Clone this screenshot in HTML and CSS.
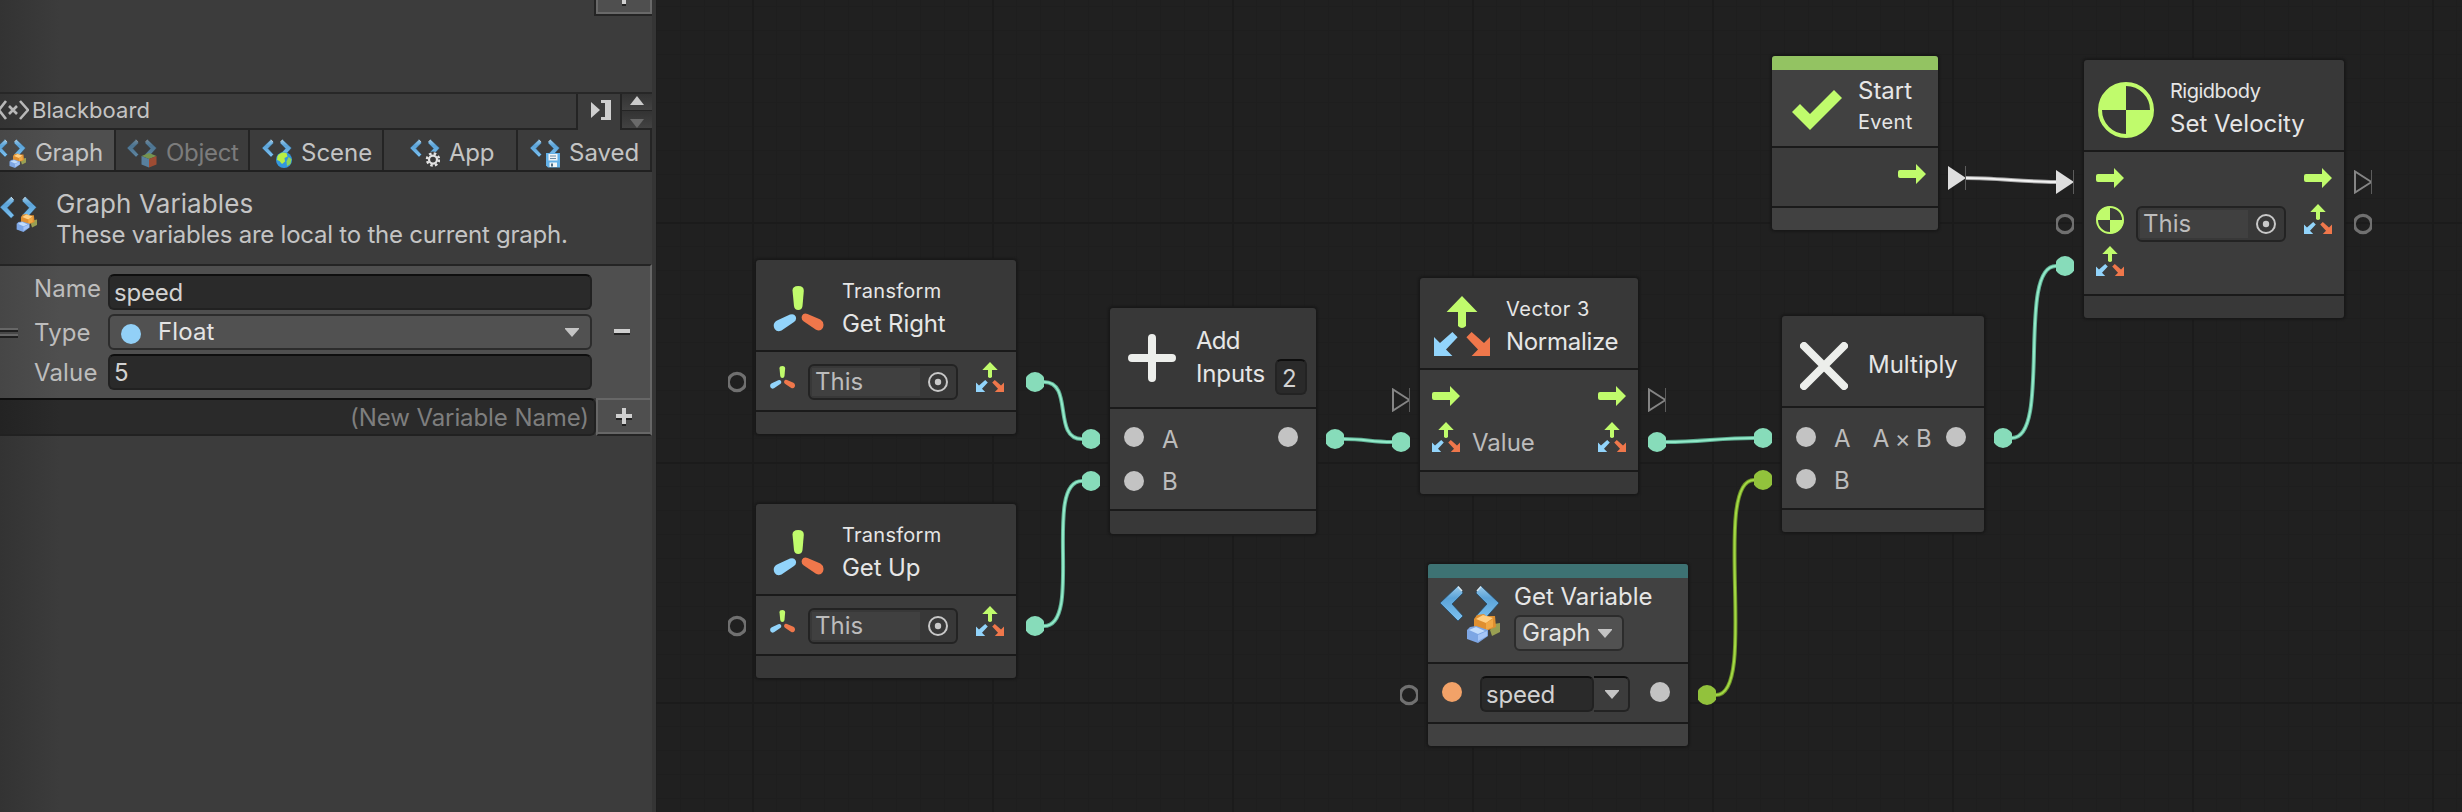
FILE: index.html
```html
<!DOCTYPE html>
<html lang="en">
<head>
<meta charset="utf-8">
<title>Script Graph</title>
<link rel="stylesheet" href="styles.css">
</head>
<body>
<svg class="defs" width="0" height="0">
  <defs>
    <linearGradient id="steel" x1="0" y1="0" x2="0" y2="1"><stop offset="0" stop-color="#9ccbea"/><stop offset=".35" stop-color="#5ba3d8"/><stop offset="1" stop-color="#7ec3f2"/></linearGradient>
  </defs>
  <symbol id="vec" viewBox="0 0 28 30">
    <path fill="#c0fb6c" d="M14 0L21.7 8H16V15Q14 17 12 15V8H6.3Z"/>
    <path fill="#92d4fb" d="M0 20.5L3 23.5L9.2 18L11.8 20.6L6 26.8L9.2 30H0Z"/>
    <path fill="#ef774b" d="M28 20.5L25 23.5L18.8 18L16.2 20.6L22 26.8L18.8 30H28Z"/>
  </symbol>
  <symbol id="trans" viewBox="0 0 50 46">
    <path fill="#c0fb6c" d="M19 4.500Q19 0 24.700 0Q30.500 0 30.300 5L29 20Q28.500 24 24.700 24Q21 24 20.500 20Z"/>
    <path fill="#92d4fb" d="M3.500 34.500L16.500 28.600Q20.500 27.300 22.200 30.500Q23.500 34 20.500 36L8 44.500Q3.800 46.700 1.200 43Q-1.600 37.500 3.500 34.500Z"/>
    <path fill="#ef774b" d="M46.900 33.500L34 27.900Q30 26.600 28.500 29.800Q27.300 33.300 30 35.300L42.500 43.800Q46.700 46 49.300 42Q51.500 36.500 46.900 33.500Z"/>
  </symbol>
  <symbol id="flow" viewBox="0 0 28 20"><path fill="#c0fb6c" d="M2 6H18V0L28 10L18 20V14H2Q0 14 0 12V8Q0 6 2 6Z"/></symbol>
  <symbol id="rigid" viewBox="0 0 56 56"><circle cx="28" cy="28" r="26" fill="none" stroke="#c0fb6c" stroke-width="4"/><path fill="#c0fb6c" d="M28 28V1A27 27 0 0 0 1 28ZM28 28V55A27 27 0 0 0 55 28Z"/></symbol>
  <symbol id="chev" viewBox="0 0 60 58" overflow="visible">
    <path d="M22 6L18 1L0 18L18 36L23 31L12 19L23 8Z" fill="url(#steel)" stroke="#264a66" stroke-width=".8"/>
    <path d="M37 6L41 1L59 18L43 36L36 31L47 19L36 8Z" fill="url(#steel)" stroke="#264a66" stroke-width=".8"/>
    <path d="M18 1.500L22 6M41 1.500L37 6" stroke="#d8e6ee" stroke-width="1.500"/>
  </symbol>
  <symbol id="var" viewBox="0 0 60 58" overflow="visible">
    <use href="#chev" width="60" height="58"/>
    <path d="M50 45L54 39L60 38V47L52 51Z" fill="#999f52"/>
    <path d="M34 34L37 30L44 29L46 31L55 31L56 42L46 46L34 42Z" fill="#df8f30"/>
    <path d="M36 34L43 30L53 33L46 38Z" fill="#ffcf83"/><path d="M46 38L53 34V42L46 45Z" fill="#f2a945"/>
    <path d="M27 45L30 42L36 41L48 45V51L38 58L27 54Z" fill="#7da6e4"/>
    <path d="M29 45L36 42L45 46L38 49Z" fill="#c2dcfb"/><path d="M38 50L47 46V51L38 56Z" fill="#a5c5f6"/>
  </symbol>
  <symbol id="var-object" viewBox="0 0 60 58" overflow="visible">
    <use href="#chev" width="60" height="58"/>
    <path d="M29 34L44 28L59 34L44 40Z" fill="#a6dc5f"/><path d="M29 34L44 40V57L29 51Z" fill="#6fb8ee"/><path d="M59 34L44 40V57L59 51Z" fill="#ef5a2c"/>
  </symbol>
  <symbol id="var-scene" viewBox="0 0 60 58" overflow="visible">
    <use href="#chev" width="60" height="58"/>
    <circle cx="44" cy="42" r="16" fill="#3397dd"/><path d="M31 34Q38 24 49 28L51 35L45 38L46 45L40 50L35 44L30 42Z" fill="#b9ef45"/><path d="M53 36L59 40L57 50L50 54L49 45Z" fill="#8ed457"/>
  </symbol>
  <symbol id="var-app" viewBox="0 0 60 58" overflow="visible">
    <use href="#chev" width="60" height="58"/>
    <circle cx="46" cy="41" r="12" fill="none" stroke="#3c3c3c" stroke-width="8"/>
    <circle cx="46" cy="41" r="12" fill="none" stroke="#e3e3e3" stroke-width="5" stroke-dasharray="5 4.420"/><circle cx="46" cy="41" r="8" fill="#3c3c3c" stroke="#e3e3e3" stroke-width="4.500"/>
  </symbol>
  <symbol id="var-saved" viewBox="0 0 60 58" overflow="visible">
    <use href="#chev" width="60" height="58"/>
    <path d="M32 28H60V57H36L32 53Z" fill="#63b1e8"/><path d="M37 30H55V43H37ZM39 47H54V56H39Z" fill="#f1f5f7"/><path d="M40 34H52M40 39H52" stroke="#6d8ca3" stroke-width="2"/><path d="M42 49H46V55H42Z" fill="#4c6e88"/>
  </symbol>
  <symbol id="target" viewBox="0 0 20 20"><circle cx="10" cy="10" r="9" fill="none" stroke="#c8c8c8" stroke-width="2"/><circle cx="10" cy="10" r="3.200" fill="#c8c8c8"/></symbol>
  <symbol id="down" viewBox="0 0 14 9"><path fill="#c4c4c4" d="M0 0H14V1L7 9L0 1Z"/></symbol>
  <symbol id="ring" viewBox="0 0 18 24"><circle cx="9" cy="12" r="8.700" fill="none" stroke="#707070" stroke-width="3.200"/></symbol>
  <symbol id="dot" viewBox="0 0 18 24"><circle cx="9" cy="12" r="10" fill="currentColor"/></symbol>
  <symbol id="tri" viewBox="0 0 18 24"><path d="M1 1.500V22.500L17.500 12Z" fill="none" stroke="#858585" stroke-width="2"/><path d="M17.500 0V24" stroke="#5c5c5c" stroke-width="1"/></symbol>
  <symbol id="tri-on" viewBox="0 0 18 24"><path d="M0 0L18 12L0 24Z" fill="#dedede"/><path d="M17.500 0V24" stroke="#5c5c5c" stroke-width="1"/></symbol>
</svg>

<div class="app">
  <aside class="side">
    <div class="inspector-tail"><div class="mini-btn"><i class="plus-stub"></i></div></div>

    <div class="bb-head">
      <div class="bb-title">
        <svg class="bb-icon" width="29" height="22" viewBox="0 0 29 22"><path d="M6 2L-1 11L6 20M20 2L28 11L20 20M9 7L17 15M17 7L9 15" fill="none" stroke="#b8b8b8" stroke-width="2.600"/></svg>
        <span class="t-bb">Blackboard</span>
      </div>
      <div class="bb-dock"><svg width="20" height="20" viewBox="0 0 20 20"><path fill="#cfcfcf" d="M0 2L9 10L0 18ZM10 0H20V20H10V17H14V3H10Z"/></svg></div>
      <div class="bb-steps">
        <div class="step"><svg width="14" height="9" viewBox="0 0 14 9"><path fill="#cacaca" d="M7 0L14 9H0Z"/></svg></div>
        <div class="step low"><svg width="14" height="9" viewBox="0 0 14 9"><path fill="#6a6a6a" d="M7 9L14 0H0Z"/></svg></div>
      </div>
    </div>

    <div class="tabs">
      <div class="tab tab-graph"><svg class="ti"><use href="#var"/></svg><span class="t-tab">Graph</span></div>
      <div class="tab tab-object"><svg class="ti"><use href="#var-object"/></svg><span class="t-tab">Object</span></div>
      <div class="tab tab-scene"><svg class="ti"><use href="#var-scene"/></svg><span class="t-tab">Scene</span></div>
      <div class="tab tab-app"><svg class="ti"><use href="#var-app"/></svg><span class="t-tab">App</span></div>
      <div class="tab tab-saved"><svg class="ti"><use href="#var-saved"/></svg><span class="t-tab">Saved</span></div>
    </div>

    <div class="intro">
      <svg class="intro-icon"><use href="#var"/></svg>
      <div class="intro-text"><div><span class="t-gv">Graph Variables</span></div><div class="intro-sub"><span class="t-these">These variables are local to the current graph.</span></div></div>
    </div>

    <div class="variable">
      <div class="grip"><i></i><i></i></div>
      <div class="rows">
        <div class="row"><label class="l1"><span class="t-label">Name</span></label><div class="input"><span class="t-val">speed</span></div></div>
        <div class="row"><label class="l2"><span class="t-label">Type</span></label><div class="input select"><i class="float-dot"></i><span class="t-float">Float</span><svg class="caret"><use href="#down"/></svg></div></div>
        <div class="row"><label class="l3"><span class="t-label">Value</span></label><div class="input"><span class="t-val">5</span></div></div>
      </div>
      <div class="minus"><i></i></div>
    </div>

    <div class="new-var">
      <div class="new-name"><span class="t-new">(New Variable Name)</span></div>
      <div class="add-btn"><svg width="16" height="18" viewBox="0 0 16 18"><path fill="#222" d="M6 2H10V8H16V12H10V18H6V12H0V8H6Z"/><path fill="#cfcfcf" d="M6 0H10V6H16V10H10V16H6V10H0V6H6Z"/></svg></div>
    </div>
  </aside>

  <main class="canvas">
    <svg class="wires" width="1806" height="812" viewBox="656 0 1806 812">
      <g fill="none" stroke-width="4" stroke="#5fae93">
        <path d="M1044 382C1074 382 1052 439 1082 439"/>
        <path d="M1044 626C1084 626 1042 481 1082 481"/>
        <path d="M1344 439C1364 439 1372 442 1392 442"/>
        <path d="M1666 442C1700 442 1720 438 1754 438"/>
        <path d="M2012 438C2052 438 2016 266 2056 266"/>
      </g>
      <g fill="none" stroke-width="2" stroke="#92eac9">
        <path d="M1044 382C1074 382 1052 439 1082 439"/>
        <path d="M1044 626C1084 626 1042 481 1082 481"/>
        <path d="M1344 439C1364 439 1372 442 1392 442"/>
        <path d="M1666 442C1700 442 1720 438 1754 438"/>
        <path d="M2012 438C2052 438 2016 266 2056 266"/>
      </g>
      <path d="M1716 695C1759 695 1711 480 1754 480" fill="none" stroke="#6f9629" stroke-width="4"/>
      <path d="M1716 695C1759 695 1711 480 1754 480" fill="none" stroke="#a3d944" stroke-width="2"/>
      <path d="M1966 178C1996 178 2026 182 2056 182" fill="none" stroke="#a8a8a8" stroke-width="4"/>
      <path d="M1966 178C1996 178 2026 182 2056 182" fill="none" stroke="#f2f2f2" stroke-width="2"/>
      <g class="mint">
        <use href="#dot" x="1026" y="370" width="18" height="24"/><use href="#dot" x="1082" y="427" width="18" height="24"/>
        <use href="#dot" x="1026" y="614" width="18" height="24"/><use href="#dot" x="1082" y="469" width="18" height="24"/>
        <use href="#dot" x="1326" y="427" width="18" height="24"/><use href="#dot" x="1392" y="430" width="18" height="24"/>
        <use href="#dot" x="1648" y="430" width="18" height="24"/><use href="#dot" x="1754" y="426" width="18" height="24"/>
        <use href="#dot" x="1994" y="426" width="18" height="24"/><use href="#dot" x="2056" y="254" width="18" height="24"/>
      </g>
      <g class="lime"><use href="#dot" x="1754" y="468" width="18" height="24"/><use href="#dot" x="1698" y="683" width="18" height="24"/></g>
      <use href="#ring" x="728" y="370" width="18" height="24"/><use href="#ring" x="728" y="614" width="18" height="24"/>
      <use href="#ring" x="1400" y="683" width="18" height="24"/><use href="#ring" x="2056" y="212" width="18" height="24"/>
      <use href="#ring" x="2354" y="212" width="18" height="24"/>
      <use href="#tri" x="1392" y="388" width="18" height="24"/><use href="#tri" x="1648" y="388" width="18" height="24"/><use href="#tri" x="2354" y="170" width="18" height="24"/>
      <use href="#tri-on" x="1948" y="166" width="18" height="24"/><use href="#tri-on" x="2056" y="170" width="18" height="24"/>
    </svg>

    <section class="node n-right">
      <header><svg class="i-trans"><use href="#trans"/></svg><div class="titles"><div class="sub"><span class="t-transform">Transform</span></div><div class="main"><span class="t-get">Get Right</span></div></div></header>
      <div class="body"><div class="port"><svg class="p-trans"><use href="#trans"/></svg><div class="objfield"><div class="objname"><span>This</span></div><svg class="tgt"><use href="#target"/></svg></div><svg class="p-vec end"><use href="#vec"/></svg></div></div>
      <footer></footer>
    </section>

    <section class="node n-up">
      <header><svg class="i-trans"><use href="#trans"/></svg><div class="titles"><div class="sub"><span class="t-transform">Transform</span></div><div class="main"><span class="t-get">Get Up</span></div></div></header>
      <div class="body"><div class="port"><svg class="p-trans"><use href="#trans"/></svg><div class="objfield"><div class="objname"><span>This</span></div><svg class="tgt"><use href="#target"/></svg></div><svg class="p-vec end"><use href="#vec"/></svg></div></div>
      <footer></footer>
    </section>

    <section class="node n-add">
      <header><svg class="i-op" viewBox="0 0 48 48"><path d="M4 24H44M24 4V44" stroke="#eceeeb" stroke-width="8" stroke-linecap="round"/></svg>
        <div class="titles"><div class="main"><span class="t-add">Add</span></div><div class="main"><span class="t-inputs">Inputs</span></div></div><div class="count"><span>2</span></div></header>
      <div class="body"><div class="port"><i class="pin"></i><span class="pl">A</span><i class="pin end"></i></div><div class="port"><i class="pin lower"></i><span class="pl">B</span></div></div>
      <footer></footer>
    </section>

    <section class="node n-norm">
      <header><svg class="i-vec"><use href="#vec"/></svg><div class="titles"><div class="sub"><span class="t-v3">Vector 3</span></div><div class="main"><span class="t-norm">Normalize</span></div></div></header>
      <div class="body"><div class="port"><svg class="p-flow"><use href="#flow"/></svg><svg class="p-flow end"><use href="#flow"/></svg></div><div class="port"><svg class="p-vec"><use href="#vec"/></svg><span class="pl">Value</span><svg class="p-vec end"><use href="#vec"/></svg></div></div>
      <footer></footer>
    </section>

    <section class="node tinted n-var">
      <div class="band teal"></div>
      <header><svg class="i-var"><use href="#var"/></svg><div class="titles"><div class="main"><span>Get Variable</span></div><div class="kind"><span class="t-kind">Graph</span><svg class="caret"><use href="#down"/></svg></div></div></header>
      <div class="body"><div class="port"><i class="pin orange"></i><div class="combo"><div class="combo-text"><span class="t-val">speed</span></div><div class="combo-drop"><svg class="caret"><use href="#down"/></svg></div></div><i class="pin end"></i></div></div>
      <footer></footer>
    </section>

    <section class="node n-mul">
      <header><svg class="i-op" viewBox="0 0 48 48"><path d="M4 4L44 44M44 4L4 44" stroke="#eceeeb" stroke-width="8" stroke-linecap="round"/></svg><div class="titles"><div class="main"><span>Multiply</span></div></div></header>
      <div class="body"><div class="port"><i class="pin"></i><span class="pl">A</span><span class="pl end t-axb">A × B</span><i class="pin out"></i></div><div class="port"><i class="pin"></i><span class="pl">B</span></div></div>
      <footer></footer>
    </section>

    <section class="node tinted n-start">
      <div class="band green"></div>
      <header><svg class="i-check" viewBox="0 0 50 40"><path fill="#c0fb6c" d="M0 22L8 14L18 24L42 0L50 8L18 40Z"/></svg><div class="titles"><div class="main"><span>Start</span></div><div class="sub"><span class="t-event">Event</span></div></div></header>
      <div class="body"><div class="port"><svg class="p-flow end"><use href="#flow"/></svg></div></div>
      <footer></footer>
    </section>

    <section class="node n-vel">
      <header><svg class="i-rigid"><use href="#rigid"/></svg><div class="titles"><div class="sub"><span class="t-rb">Rigidbody</span></div><div class="main"><span>Set Velocity</span></div></div></header>
      <div class="body"><div class="port"><svg class="p-flow"><use href="#flow"/></svg><svg class="p-flow end"><use href="#flow"/></svg></div>
        <div class="port"><svg class="p-rigid"><use href="#rigid"/></svg><div class="objfield"><div class="objname"><span>This</span></div><svg class="tgt"><use href="#target"/></svg></div><svg class="p-vec end"><use href="#vec"/></svg></div>
        <div class="port"><svg class="p-vec"><use href="#vec"/></svg></div></div>
      <footer></footer>
    </section>
  </main>
</div>
</body>
</html>
```
FILE: styles.css
```css
* { box-sizing: border-box; }
body { margin: 0; background: #202020; font-family: Inter, "Liberation Sans", sans-serif; font-size: 24px; color: #c4c4c4; }
.defs { position: absolute; }
svg { display: block; flex: none; }
i { display: block; flex: none; }
span { white-space: nowrap; }
.app { display: flex; width: 2462px; height: 812px; overflow: hidden; }

/* Sidebar */
.side { width: 656px; flex: none; display: flex; flex-direction: column; background: linear-gradient(90deg, #333 0, #3c3c3c 60px, #3c3c3c 652px, #353535 652px); padding-right: 4px; }
.inspector-tail { height: 92px; display: flex; justify-content: flex-end; }
.mini-btn { width: 58px; height: 16px; background: #4f4f4f; border: 2px solid #242424; border-top: 0; border-right: 0; box-shadow: inset 2px -2px 0 #696969, inset -2px 0 0 #696969; display: flex; justify-content: center; }
.plus-stub { width: 4px; height: 6px; background: #cfcfcf; border-bottom: 2px solid #222; }
.bb-head { height: 38px; border-top: 2px solid #272727; display: flex; }
.bb-title { width: 578px; height: 36px; border-right: 2px solid #242424; border-bottom: 2px solid #242424; display: flex; padding-top: 5px; }
.bb-icon { margin-right: 3px; }
.bb-title span { line-height: 22px; }
.bb-dock { width: 42px; padding: 6px 0 0 13px; }
.bb-steps { width: 32px; height: 36px; border-left: 2px solid #242424; border-bottom: 2px solid #242424; }
.step { height: 17px; background: linear-gradient(#333, #424242); padding: 2px 0 0 8px; border-bottom: 1px solid #242424; }
.step.low { padding-top: 8px; border: 0; }
.tabs { display: flex; height: 42px; border-bottom: 2px solid #202020; }
.tab { width: 134px; height: 40px; border-right: 2px solid #242424; display: flex; padding-top: 9px; }
.tab .ti { width: 30px; height: 29px; margin-right: 9px; }
.tab span { line-height: 28px; }
.tab-graph { width: 116px; background: linear-gradient(90deg, #484848, #4f4f4f 60px); }
.tab-graph .ti { margin-left: -4px; }
.tab-object { padding-left: 11px; color: #7c7c7c; }
.tab-object .ti { opacity: .55; }
.tab-scene { padding-left: 12px; }
.tab-app { padding-left: 26px; }
.tab-saved { padding-left: 12px; }
.intro { height: 92px; display: flex; padding-top: 24px; }
.intro-icon { width: 37px; height: 36px; margin-right: 19px; }
.intro-text { line-height: 28px; margin-top: -6px; }
.intro-sub { margin-top: 2px; }
.variable { height: 134px; border-top: 2px solid #242424; display: flex; background: linear-gradient(90deg, #464646, #4f4f4f 60px); border-right: 2px solid #676767; }
.grip { width: 18px; margin-right: 16px; padding-top: 62px; }
.grip i { height: 4px; margin-bottom: 2px; background: #1f1f1f; border-top: 2px solid #666; }
.rows { width: 558px; padding-top: 8px; display: flex; flex-direction: column; gap: 4px; }
.row { display: flex; height: 36px; }
.row label { width: 74px; line-height: 29px; color: #bdbdbd; }
.row .l2, .row .l3 { padding-top: 4px; }
.input { width: 484px; height: 36px; border: 2px solid #212121; border-top-color: #0e0e0e; border-radius: 6px; background: #2a2a2a; padding-left: 4px; line-height: 33px; display: flex; color: #d2d2d2; }
.select { background: #515151; border-color: #2c2c2c; padding: 0; line-height: 32px; color: #e4e4e4; }
.float-dot { width: 20px; height: 20px; margin: 8px 17px 0 11px; border-radius: 50%; background: #92d0f7; }
.caret { width: 14px; height: 9px; }
.select .caret { margin: 12px 11px 0 auto; }
.minus { width: 40px; padding: 63px 0 0 22px; }
.minus i { width: 16px; height: 6px; background: #cfcfcf; border-bottom: 2px solid #242424; }
.new-var { display: flex; height: 38px; }
.new-name { width: 596px; background: linear-gradient(90deg, #232323, #2a2a2a 60px); border-top: 2px solid #0e0e0e; border-bottom: 2px solid #212121; border-radius: 0 6px 6px 0; border-right: 2px solid #212121; display: flex; justify-content: flex-end; padding-right: 5px; color: #7e7e7e; line-height: 35px; }
.add-btn { width: 56px; background: #4f4f4f; border: 2px solid #676767; box-shadow: inset 0 -2px #676767; border-bottom: 2px solid #242424; display: flex; justify-content: center; padding-top: 8px; }

/* Canvas */
.canvas { position: relative; width: 1806px; height: 812px; overflow: hidden; background:
  linear-gradient(90deg, #1b1b1b 2px, transparent 2px) 96px 0 / 240px 240px,
  linear-gradient(#1b1b1b 2px, transparent 2px) 0 222px / 240px 240px,
  linear-gradient(90deg, #1e1e1e 1px, transparent 1px) 0 0 / 24px 24px,
  linear-gradient(#1e1e1e 1px, transparent 1px) 0 6px / 24px 24px, #202020; }
.wires { position: absolute; left: 0; top: 0; }
.mint { color: #87dcba; }
.lime { color: #92c23c; }

.node { position: absolute; display: flex; flex-direction: column; background: #383838; border-radius: 3px; box-shadow: 0 0 2px 2px #191919; color: #e6e6e6; }
.node header { display: flex; }
.tinted { background: #414141; }
.band { height: 14px; border-radius: 3px 3px 0 0; }
.teal { background: #3d7273; }
.green { background: #93c362; }
.body { border: solid #1a1a1a; border-width: 2px 0; background: #3c3c3c; padding: 10px 12px 0; display: flex; flex-direction: column; gap: 12px; color: #bcbcbc; }
.node footer { height: 22px; }
.port { height: 30px; display: flex; }
.end { margin-left: auto; }
.sub { line-height: 34px; }
.main { line-height: 31px; }
.pl { line-height: 41px; }
.pin { width: 20px; height: 20px; margin: 8px 2px 0 2px; border-radius: 50%; background: #c3c3c3; }
.pin.end { margin-left: auto; margin-right: 6px; }
.orange { background: #f2a268; }
.p-vec { width: 28px; height: 30px; }
.p-flow { width: 28px; height: 20px; margin-top: 6px; }
.p-trans { width: 25px; height: 23px; margin: 4px 1px 0 2px; }
.p-rigid { width: 28px; height: 28px; margin-top: 2px; }
.objfield { width: 150px; height: 36px; margin: 2px 0 0 12px; border: 2px solid #232323; border-radius: 6px; background: #383838; display: flex; padding: 2px; }
.objname { width: 108px; height: 28px; background: #404040; padding-left: 3px; line-height: 27px; }
.tgt { width: 20px; height: 20px; margin: 4px 0 0 8px; }

.n-right, .n-up { left: 100px; width: 260px; height: 174px; }
.n-right { top: 260px; }
.n-up { top: 504px; }
.n-right header, .n-up header { height: 90px; padding: 13px 0 0 17px; }
.n-right .body, .n-up .body { height: 62px; }
.i-trans { width: 51px; height: 46px; margin: 13px 18px 0 0; }

.n-add { left: 454px; top: 308px; width: 206px; height: 226px; }
.n-add header { height: 99px; padding: 16px 0 0 18px; }
.n-add .main { line-height: 33px; }
.i-op { width: 48px; height: 48px; margin: 10px 20px 0 0; }
.count { width: 32px; height: 36px; margin: 35px 0 0 10px; border: 2px solid #232323; border-top-color: #0e0e0e; border-radius: 6px; background: #2a2a2a; color: #d2d2d2; padding-left: 5px; line-height: 35px; }
.n-add .body { height: 104px; }
.pin + .pl { margin-left: 16px; }
.pin.lower { margin-top: 10px; }

.n-norm { left: 764px; top: 278px; width: 218px; height: 216px; }
.n-norm header { height: 90px; padding: 13px 0 0 14px; }
.i-vec { width: 56px; height: 60px; margin: 5px 16px 0 0; }
.n-norm .body { height: 104px; }
.p-vec + .pl { margin-left: 12px; }

.n-var { left: 772px; top: 564px; width: 260px; height: 182px; }
.n-var header { height: 85px; padding-left: 12px; }
.i-var { width: 60px; height: 58px; margin: 7px 14px 0 0; }
.n-var .main { line-height: 37px; }
.kind { width: 110px; height: 36px; border: 2px solid #2c2c2c; border-radius: 6px; background: #515151; display: flex; padding-left: 6px; line-height: 31px; }
.kind .caret { margin: 12px 0 0 8px; }
.n-var .body { height: 62px; padding-top: 10px; }
.combo { display: flex; height: 36px; margin: 2px 0 0 16px; color: #d2d2d2; }
.combo-text { width: 114px; border: 2px solid #212121; border-top-color: #0e0e0e; border-radius: 6px; background: #2a2a2a; padding-left: 4px; line-height: 33px; }
.combo-drop { width: 36px; border: 2px solid #232323; border-left: 0; border-top-color: #0e0e0e; border-radius: 0 6px 6px 0; padding: 12px 0 0 11px; }

.n-mul { left: 1126px; top: 316px; width: 202px; height: 216px; }
.n-mul header { height: 90px; padding: 16px 0 0 18px; }
.n-mul .titles { padding-top: 16px; }
.n-mul .main { line-height: 33px; }
.n-mul .body { height: 104px; }
.n-mul .pin { margin-top: 9px; }
.n-mul .out { margin-left: 15px; margin-right: 6px; }

.n-start { left: 1116px; top: 56px; width: 166px; height: 174px; }
.n-start header { height: 76px; padding-left: 20px; }
.i-check { width: 50px; height: 40px; margin: 20px 16px 0 0; }
.n-start .titles { padding-top: 5px; }
.n-start .sub { line-height: 30px; }
.n-start .body { height: 62px; }

.n-vel { left: 1428px; top: 60px; width: 260px; height: 258px; }
.n-vel header { height: 90px; padding: 13px 0 0 14px; }
.i-rigid { width: 56px; height: 56px; margin: 9px 16px 0 0; }
.n-vel .body { height: 146px; }

/* Text */
.t-bb { font-size: 22px; letter-spacing: .06px; }
.t-tab { letter-spacing: -.3px; }
.tab-saved .t-tab, .tab-scene .t-tab { letter-spacing: 0; }
.t-gv { font-size: 26px; letter-spacing: .1px; }
.t-these { letter-spacing: -.24px; }
.t-label { letter-spacing: .14px; }
.t-val, .t-kind { letter-spacing: -.2px; }
.t-float { letter-spacing: .1px; }
.t-new { letter-spacing: -.09px; }
.t-transform { font-size: 20px; letter-spacing: .27px; }
.t-get { letter-spacing: -.1px; }
.t-add { letter-spacing: -.7px; }
.t-inputs { letter-spacing: -.13px; }
.t-v3 { font-size: 20px; letter-spacing: .52px; }
.t-norm { letter-spacing: -.3px; }
.t-axb { letter-spacing: -.7px; }
.t-event { font-size: 20px; letter-spacing: .34px; }
.t-rb { font-size: 20px; letter-spacing: -.5px; }
```
